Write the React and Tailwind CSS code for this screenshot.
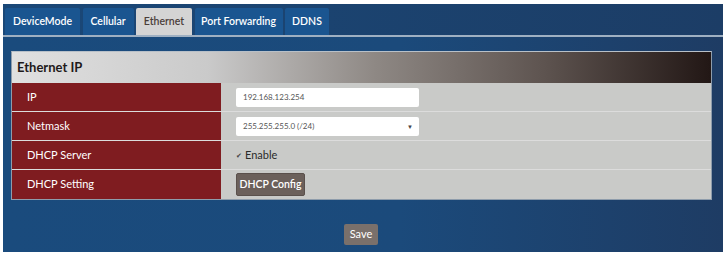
const tabs = [
  { name: 'DeviceMode', w: 'w-[75px]' },
  { name: 'Cellular', w: 'w-[51px]' },
  { name: 'Ethernet', w: 'w-[56px]' },
  { name: 'Port Forwarding', w: 'w-[88px]' },
  { name: 'DDNS', w: 'w-[44px]' },
]

const font = { fontFamily: 'Lato, "Open Sans", "Liberation Sans", sans-serif' }

function Row({ label, children, last }) {
  return (
    <div className={`flex h-[29px] ${last ? '' : 'border-b border-[#dcdcdc]'}`}>
      <div className="w-[209px] bg-[#7f1c20] flex items-center pl-[15px] text-[11px] text-white">{label}</div>
      <div className="flex-1 bg-[#c9cac8] flex items-center pl-[15px]">{children}</div>
    </div>
  )
}

export default function App() {
  return (
    <div className="w-[727px] h-[256px] bg-white pt-[4px] pl-[3px]" style={font}>
      <div className="w-[720px] h-[248px] flex flex-col bg-[linear-gradient(to_right,#1a4b7d,#1b4a7b_55%,#1e3c64)]">
        <div className="flex gap-[2.5px] pl-[2px] pt-[4px] border-b-2 border-[#9fb0c2] bg-[linear-gradient(to_right,#1a4878,#1c3d66)]">
          {tabs.map((t) => (
            <div
              key={t.name}
              className={`${t.w} h-[27px] flex items-center justify-center text-[10.5px] font-semibold rounded-t-[2px] ${
                t.name === 'Ethernet' ? 'bg-[#d4d4d4] text-[#4a3d39]' : 'bg-[#1a5590] text-white'
              }`}
            >
              {t.name}
            </div>
          ))}
        </div>

        <div className="ml-[8px] mt-[14px] w-[701px] border border-[#8e9cab] border-t-[#b8c0c8]">
          <div className="h-[31px] flex items-center pl-[5px] text-[13px] font-bold text-[#1f1a1a] bg-[linear-gradient(to_right,#e0e0e0_0%,#cacaca_28%,#8e8884_52%,#5e5450_76%,#221715_100%)]">
            Ethernet IP
          </div>
          <Row label="IP">
            <div className="w-[183px] h-[19px] bg-white rounded-[2px] flex items-center pl-[7px] text-[8px] text-[#555]">
              192.168.123.254
            </div>
          </Row>
          <Row label="Netmask">
            <div className="w-[183px] h-[19px] bg-white rounded-[2px] flex items-center justify-between pl-[7px] pr-[6px] text-[8px] text-[#555]">
              <span>255.255.255.0 (/24)</span>
              <span className="text-[6px] text-[#444]">▼</span>
            </div>
          </Row>
          <Row label="DHCP Server">
            <div className="flex items-center gap-[3px] text-[11px] text-[#2a2a2a]">
              <span className="text-[7px] text-[#444]">✔</span>
              <span>Enable</span>
            </div>
          </Row>
          <Row label="DHCP Setting" last>
            <div className="h-[23px] w-[69px] justify-center bg-[#6b605b] rounded-[2px] flex items-center text-[10.5px] font-semibold text-white border border-[#5a504c]">
              DHCP Config
            </div>
          </Row>
        </div>

        <div className="flex justify-center mt-[24px] mr-[4px]">
          <div className="h-[21px] w-[34px] justify-center bg-[#7a706b] rounded-[2px] flex items-center text-[11px] text-white">Save</div>
        </div>
      </div>
    </div>
  )
}
